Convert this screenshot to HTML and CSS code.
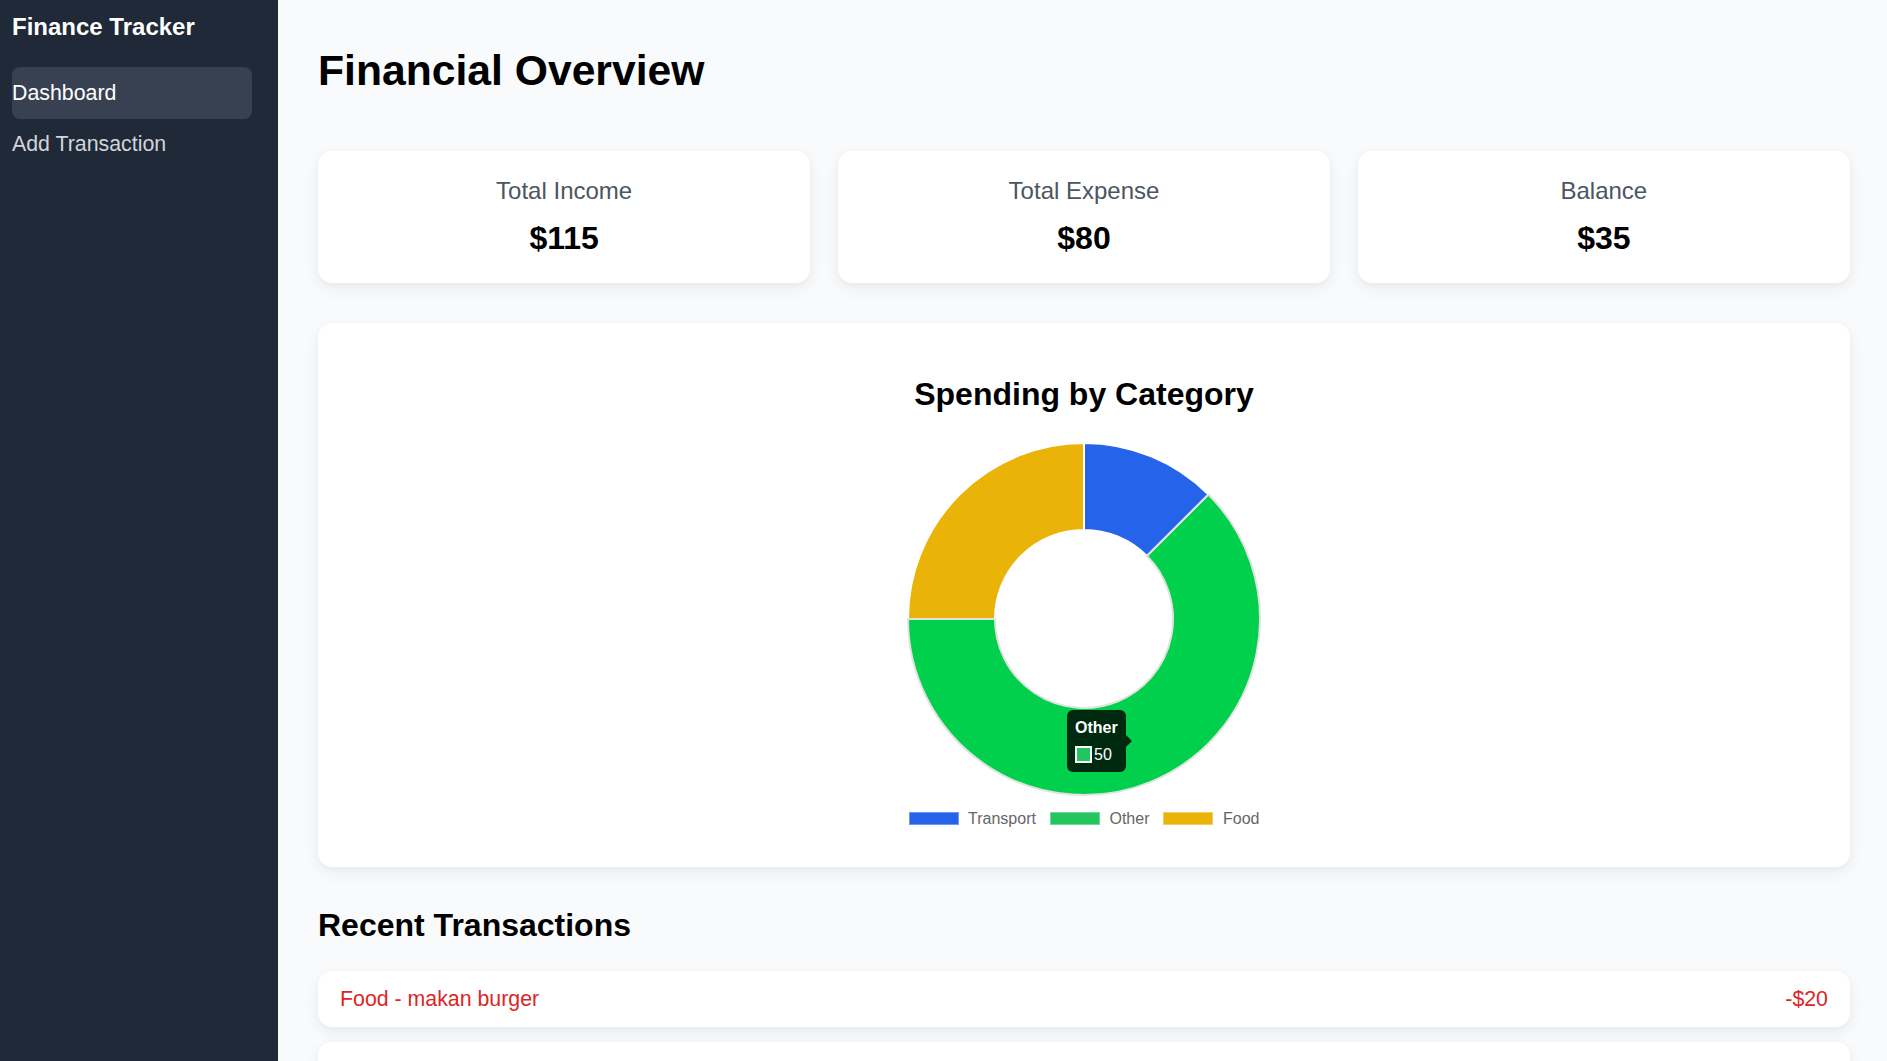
FILE: index.html
```html
<!DOCTYPE html>
<html lang="en">
<head>
<meta charset="utf-8">
<title>Finance Tracker</title>
<link rel="stylesheet" href="styles.css">
</head>
<body>
<div class="app">
  <aside class="sidebar">
    <h1 class="brand">Finance Tracker</h1>
    <nav class="nav">
      <a class="nav-link active" href="#">Dashboard</a>
      <a class="nav-link" href="#">Add Transaction</a>
    </nav>
  </aside>
  <main class="main">
    <h2 class="page-title">Financial Overview</h2>
    <section class="stats">
      <div class="stat-card">
        <p class="stat-label">Total Income</p>
        <p class="stat-value">$115</p>
      </div>
      <div class="stat-card">
        <p class="stat-label">Total Expense</p>
        <p class="stat-value">$80</p>
      </div>
      <div class="stat-card">
        <p class="stat-label">Balance</p>
        <p class="stat-value">$35</p>
      </div>
    </section>

    <section class="chart-card">
      <h3 class="chart-title">Spending by Category</h3>
      <div class="chart">
        <svg class="donut" width="360" height="360" viewBox="0 0 360 360">
          <path d="M180 4 A176 176 0 0 1 304.45 55.55 L242.93 117.07 A89 89 0 0 0 180 91 Z" fill="#2563eb" stroke="#ffffff" stroke-width="2"/>
          <path d="M4 180 A176 176 0 0 1 180 4 L180 91 A89 89 0 0 0 91 180 Z" fill="#eab308" stroke="#ffffff" stroke-width="2"/>
          <path d="M304.45 55.55 A176 176 0 1 1 4 180 L91 180 A89 89 0 1 0 242.93 117.07 Z" fill="#00d04c" stroke="#e2e2e2" stroke-width="2"/>
        </svg>
        <div class="tooltip">
          <div class="tooltip-title">Other</div>
          <div class="tooltip-body"><span class="tooltip-swatch"></span>50</div>
        </div>
      </div>
      <ul class="legend">
        <li class="legend-item"><span class="swatch swatch-blue"></span>Transport</li>
        <li class="legend-item"><span class="swatch swatch-green"></span>Other</li>
        <li class="legend-item"><span class="swatch swatch-yellow"></span>Food</li>
      </ul>
    </section>

    <h3 class="section-title">Recent Transactions</h3>
    <ul class="tx-list">
      <li class="tx expense"><span>Food - makan burger</span><span>-$20</span></li>
      <li class="tx income"><span>Salary - bonus</span><span>+$15</span></li>
      <li class="tx expense"><span>Other - belanja</span><span>-$50</span></li>
    </ul>
  </main>
</div>
</body>
</html>
```

FILE: styles.css
```css
html {
  scrollbar-width: none;
}

html::-webkit-scrollbar {
  display: none;
}

body {
  margin: 0;
  font-family: "Liberation Sans", Arial, Helvetica, sans-serif;
  background: #f9fafb;
  color: #000;
}

.app {
  display: flex;
  min-height: 100vh;
}

/* Sidebar */
.sidebar {
  width: 278px;
  flex-shrink: 0;
  box-sizing: border-box;
  padding: 13px 12px;
  background: #1f2937;
  color: #fff;
}

.brand {
  margin: 0 0 26px;
  font-size: 24px;
  line-height: 28px;
  font-weight: 700;
}

.nav {
  display: flex;
  flex-direction: column;
  width: 240px;
}

.nav-link {
  display: block;
  padding: 10px 0;
  font-size: 21.33px;
  line-height: 32px;
  color: #d1d5db;
  text-decoration: none;
  border-radius: 8px;
}

.nav-link + .nav-link {
  margin-top: -1px;
}

.nav-link.active {
  background: #374151;
  color: #fff;
}

/* Main */
.main {
  flex: 1;
  min-width: 0;
  padding: 46px 37px 40px 40px;
}

.page-title {
  margin: 0 0 57px;
  font-size: 42.67px;
  line-height: 48px;
  font-weight: 700;
}

.stats {
  display: grid;
  grid-template-columns: repeat(3, 1fr);
  gap: 27.6px;
}

.stat-card,
.chart-card,
.tx {
  background: #fff;
  border-radius: 14px;
  box-shadow: 0 6px 18px rgba(0, 0, 0, 0.05), 0 2px 6px rgba(0, 0, 0, 0.04);
}

.stat-card {
  padding: 26px;
  text-align: center;
}

.stat-label {
  margin: 0 0 14px;
  font-size: 24px;
  line-height: 28px;
  color: #4b5563;
}

.stat-value {
  margin: 0;
  font-size: 32px;
  line-height: 38px;
  font-weight: 700;
}

/* Chart */
.chart-card {
  margin-top: 40px;
  padding: 52px 0 38px;
}

.chart-title {
  margin: 0;
  text-align: center;
  font-size: 32px;
  line-height: 38px;
  font-weight: 700;
}

.chart {
  position: relative;
  width: 360px;
  height: 360px;
  margin: 26px auto 0;
}

.donut {
  display: block;
}

.tooltip {
  position: absolute;
  left: 163px;
  top: 271px;
  width: 59px;
  box-sizing: border-box;
  padding: 8px;
  background: rgba(0, 0, 0, 0.8);
  border-radius: 6px;
  color: #fff;
  font-size: 16px;
  line-height: 19px;
}

.tooltip::after {
  content: "";
  position: absolute;
  left: 100%;
  top: 50%;
  margin-top: -6px;
  border-top: 6px solid transparent;
  border-bottom: 6px solid transparent;
  border-left: 6px solid rgba(0, 0, 0, 0.8);
}

.tooltip-title {
  font-weight: 700;
  margin-bottom: 8px;
}

.tooltip-body {
  display: flex;
  align-items: center;
  gap: 2px;
}

.tooltip-swatch {
  width: 17px;
  height: 17px;
  box-sizing: border-box;
  border: 2px solid #fff;
  background: #22c55e;
}

.legend {
  display: flex;
  justify-content: center;
  align-items: center;
  gap: 14px;
  height: 20px;
  margin: 9.5px 0 0;
  padding: 0;
  list-style: none;
}

.legend-item {
  display: flex;
  align-items: center;
  gap: 9.5px;
  font-size: 16px;
  line-height: 20px;
  color: #666;
}

.swatch {
  width: 50px;
  height: 13px;
  box-shadow: inset 0 0 0 1px rgba(255, 255, 255, 0.35);
}

.swatch-blue { background: #2563eb; }
.swatch-green { background: #22c55e; }
.swatch-yellow { background: #eab308; }

/* Transactions */
.section-title {
  margin: 39px 0 27px;
  font-size: 32px;
  line-height: 38px;
  font-weight: 700;
}

.tx-list {
  list-style: none;
  margin: 0;
  padding: 0;
  display: flex;
  flex-direction: column;
  gap: 15px;
}

.tx {
  display: flex;
  justify-content: space-between;
  padding: 12px 22px;
  font-size: 21.33px;
  line-height: 32px;
}

.tx.expense { color: #dc2626; }
.tx.income { color: #16a34a; }
```
